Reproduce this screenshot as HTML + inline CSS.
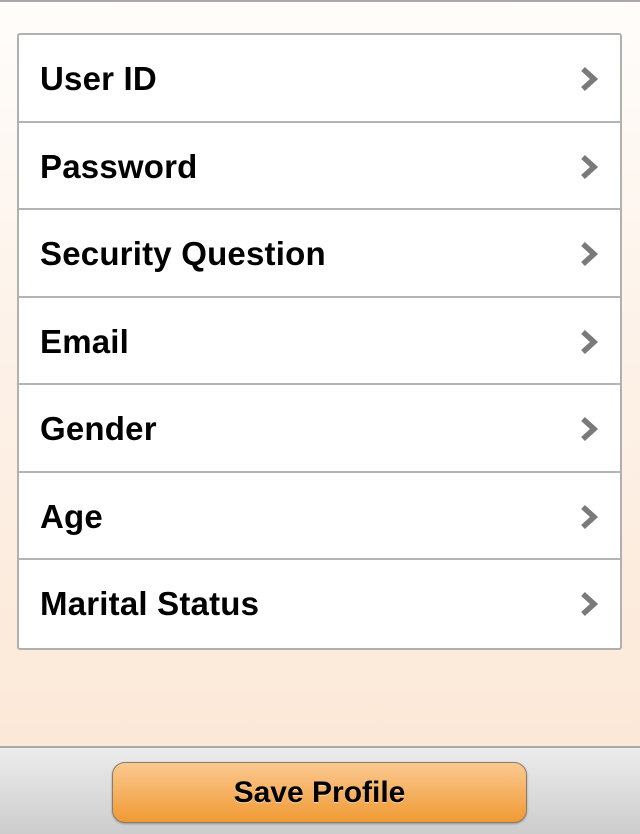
<!DOCTYPE html>
<html><head><style>
*{margin:0;padding:0;box-sizing:border-box}
body{width:640px;height:834px;overflow:hidden;font-family:"Liberation Sans",Arial,sans-serif;background:linear-gradient(#fffdfb 0,#fdf3ea 300px,#fce8d7 747px);position:relative}
.top{position:absolute;top:0;left:0;width:640px;height:2px;background:#a8a8a8}
.list{position:absolute;left:17px;top:33px;width:605px;height:617px;background:#fff;border:2px solid #b0b0b0;border-radius:3px}
.row{position:absolute;left:0;width:601px;height:88px;border-bottom:2px solid #b4b4b4}
.row span{position:absolute;left:21px;top:25px;font-size:33px;font-weight:bold;color:#000;letter-spacing:0.2px}
.row svg{position:absolute;left:560px;top:31px}
.foot{position:absolute;left:0;top:746px;width:640px;height:88px;border-top:2px solid #a8a8a8;background:linear-gradient(#ececec,#cdcdcd)}
.btn{position:absolute;left:112px;top:14px;width:415px;height:61px;border:1px solid #8a7a6a;border-radius:13px;background:linear-gradient(#fbc991,#f09a33);box-shadow:0 1px 2px rgba(0,0,0,.3);text-align:center;line-height:60px;font-size:30px;font-weight:bold;color:#000;text-shadow:0 1px 0 rgba(255,255,255,.5)}
</style></head><body>
<div class="top"></div>
<div class="list">
<div class="row" style="top:0"><span>User ID</span><svg width="20" height="26"><path d="M4 3l11 10-11 10" stroke="#7a7a7a" stroke-width="5.5" fill="none"/></svg></div>
<div class="row" style="top:88px;height:87px"><span>Password</span><svg width="20" height="26"><path d="M4 3l11 10-11 10" stroke="#7a7a7a" stroke-width="5.5" fill="none"/></svg></div>
<div class="row" style="top:175px"><span>Security Question</span><svg width="20" height="26"><path d="M4 3l11 10-11 10" stroke="#7a7a7a" stroke-width="5.5" fill="none"/></svg></div>
<div class="row" style="top:263px;height:87px"><span>Email</span><svg width="20" height="26"><path d="M4 3l11 10-11 10" stroke="#7a7a7a" stroke-width="5.5" fill="none"/></svg></div>
<div class="row" style="top:350px"><span>Gender</span><svg width="20" height="26"><path d="M4 3l11 10-11 10" stroke="#7a7a7a" stroke-width="5.5" fill="none"/></svg></div>
<div class="row" style="top:438px;height:87px"><span>Age</span><svg width="20" height="26"><path d="M4 3l11 10-11 10" stroke="#7a7a7a" stroke-width="5.5" fill="none"/></svg></div>
<div class="row" style="top:525px;border-bottom:none"><span>Marital Status</span><svg width="20" height="26"><path d="M4 3l11 10-11 10" stroke="#7a7a7a" stroke-width="5.5" fill="none"/></svg></div>
</div>
<div class="foot"><div class="btn">Save Profile</div></div>
</body></html>
